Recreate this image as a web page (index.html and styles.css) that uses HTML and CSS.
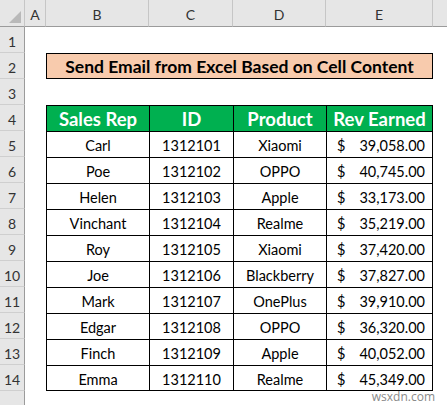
FILE: index.html
```html
<!DOCTYPE html>
<html lang="en">
<head>
<meta charset="UTF-8">
<meta name="viewport" content="width=device-width, initial-scale=1.0">
<title>Send Email from Excel Based on Cell Content</title>
<link rel="stylesheet" href="styles.css">
</head>
<body>
<div class="sheet">
    <!-- column headers -->
    <div class="corner"><span class="tri"></span></div>
    <div class="colhead">A</div>
    <div class="colhead">B</div>
    <div class="colhead">C</div>
    <div class="colhead">D</div>
    <div class="colhead">E</div>
    <div class="colhead last"></div>

    <!-- row 1 -->
    <div class="rowhead">1</div>
    <div class="blank span6"></div>

    <!-- row 2 -->
    <div class="rowhead">2</div>
    <div class="blank"></div>
    <div class="title">Send Email from Excel Based on Cell Content</div>
    <div class="blank"></div>

    <!-- row 3 -->
    <div class="rowhead">3</div>
    <div class="blank span6"></div>

    <!-- row 4 -->
    <div class="rowhead">4</div>
    <div class="blank"></div>
    <div class="th first">Sales Rep</div>
    <div class="th">ID</div>
    <div class="th">Product</div>
    <div class="th end">Rev Earned</div>
    <div class="blank"></div>

    <div class="rowhead">5</div><div class="blank"></div>
    <div class="td first">Carl</div><div class="td">1312101</div><div class="td">Xiaomi</div>
    <div class="td end money"><span>$</span><span>39,058.00</span></div><div class="blank"></div>

    <div class="rowhead">6</div><div class="blank"></div>
    <div class="td first">Poe</div><div class="td">1312102</div><div class="td">OPPO</div>
    <div class="td end money"><span>$</span><span>40,745.00</span></div><div class="blank"></div>

    <div class="rowhead">7</div><div class="blank"></div>
    <div class="td first">Helen</div><div class="td">1312103</div><div class="td">Apple</div>
    <div class="td end money"><span>$</span><span>33,173.00</span></div><div class="blank"></div>

    <div class="rowhead">8</div><div class="blank"></div>
    <div class="td first">Vinchant</div><div class="td">1312104</div><div class="td">Realme</div>
    <div class="td end money"><span>$</span><span>35,219.00</span></div><div class="blank"></div>

    <div class="rowhead">9</div><div class="blank"></div>
    <div class="td first">Roy</div><div class="td">1312105</div><div class="td">Xiaomi</div>
    <div class="td end money"><span>$</span><span>37,420.00</span></div><div class="blank"></div>

    <div class="rowhead">10</div><div class="blank"></div>
    <div class="td first">Joe</div><div class="td">1312106</div><div class="td">Blackberry</div>
    <div class="td end money"><span>$</span><span>37,827.00</span></div><div class="blank"></div>

    <div class="rowhead">11</div><div class="blank"></div>
    <div class="td first">Mark</div><div class="td">1312107</div><div class="td">OnePlus</div>
    <div class="td end money"><span>$</span><span>39,910.00</span></div><div class="blank"></div>

    <div class="rowhead">12</div><div class="blank"></div>
    <div class="td first">Edgar</div><div class="td">1312108</div><div class="td">OPPO</div>
    <div class="td end money"><span>$</span><span>36,320.00</span></div><div class="blank"></div>

    <div class="rowhead">13</div><div class="blank"></div>
    <div class="td first">Finch</div><div class="td">1312109</div><div class="td">Apple</div>
    <div class="td end money"><span>$</span><span>40,052.00</span></div><div class="blank"></div>

    <div class="rowhead">14</div><div class="blank"></div>
    <div class="td first bottom">Emma</div><div class="td bottom">1312110</div><div class="td bottom">Realme</div>
    <div class="td end bottom money"><span>$</span><span>45,349.00</span></div><div class="blank"></div>

    <div class="rowhead tail"></div>
    <div class="blank span6 tailcell"><span class="mark">wsxdn.com</span></div>
</div>
</body>
</html>
```

FILE: styles.css
```css
html, body {
    margin: 0;
    padding: 0;
    background: #ffffff;
}
body {
    font-family: Lato, "Open Sans", sans-serif;
    color: #000;
    overflow: hidden;
}
.sheet {
    display: grid;
    grid-template-columns: 25px 21px 103px 84px 93px 107px 14px;
    grid-template-rows: 27px repeat(14, 26px) 14px;
    width: 447px;
    height: 405px;
}
.corner {
    background: #e6e6e6;
    border-right: 1px solid #c6c6c6;
    border-bottom: 1px solid #9b9b9b;
    box-sizing: border-box;
    position: relative;
}
.tri {
    position: absolute;
    right: 3px;
    bottom: 3px;
    width: 0;
    height: 0;
    border-left: 12px solid transparent;
    border-bottom: 12px solid #b9b9b9;
}
.colhead {
    background: #e6e6e6;
    border-right: 1px solid #c6c6c6;
    border-bottom: 1px solid #9b9b9b;
    box-sizing: border-box;
    display: flex;
    align-items: center;
    justify-content: center;
    font-size: 14px;
    color: #333;
    padding-top: 2px;
}
.colhead.last {
    border-right: none;
}
.rowhead {
    background: #e6e6e6;
    border-right: 1px solid #9b9b9b;
    border-bottom: 1px solid #cfcfcf;
    box-sizing: border-box;
    display: flex;
    align-items: center;
    justify-content: center;
    font-size: 14px;
    color: #333;
    padding-top: 3px;
}
.rowhead.tail {
    border-bottom: none;
}
.blank {
    background: #fff;
}
.span6 {
    grid-column: span 6;
}
.tailcell {
    position: relative;
}
.mark {
    position: absolute;
    right: 12px;
    top: -1px;
    font-family: "Open Sans", sans-serif;
    font-size: 12px;
    color: #8a8a8a;
    line-height: 13px;
}
.title {
    grid-column: span 4;
    background: #f8cbad;
    border: 1px solid #000;
    box-sizing: border-box;
    display: flex;
    align-items: center;
    justify-content: center;
    font-weight: 700;
    font-size: 17.5px;
    padding-top: 1px;
}
.th, .td {
    box-sizing: border-box;
    border-left: 1px solid #000;
    border-top: 1px solid #000;
    display: flex;
    align-items: center;
    justify-content: center;
}
.th {
    background: #00b050;
    color: #fff;
    font-weight: 700;
    font-size: 18.5px;
    padding-top: 1px;
}
.td {
    font-size: 14.5px;
    padding-top: 2px;
}
.end {
    border-right: 1px solid #000;
}
.bottom {
    border-bottom: 1px solid #000;
}
.money {
    justify-content: space-between;
    padding-left: 10px;
    padding-right: 7px;
}
```
